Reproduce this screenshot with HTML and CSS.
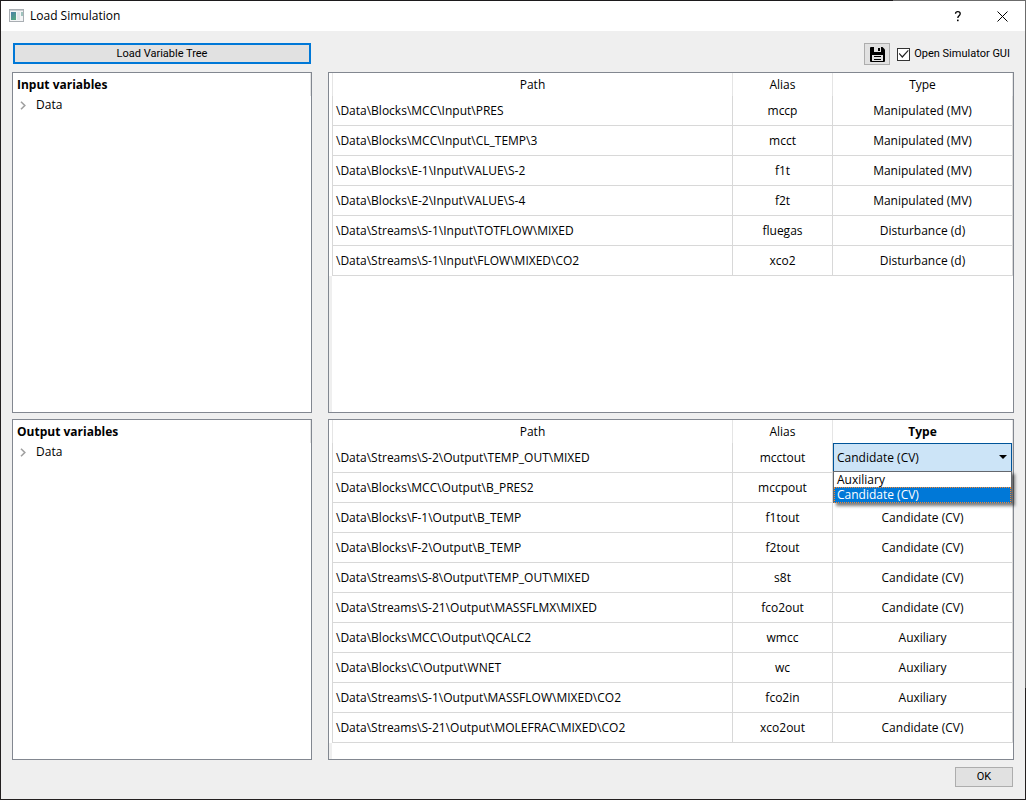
FILE: index.html
```html
<!DOCTYPE html>
<html lang="en">
<head>
<meta charset="utf-8">
<title>Load Simulation</title>
<link rel="stylesheet" href="styles.css">
</head>
<body>
<div class="frame">
  <div class="window">
    <header class="titlebar">
      <svg class="app-icon" width="16" height="14" viewBox="0 0 16 14" aria-hidden="true">
        <defs>
          <linearGradient id="pane" x1="0" y1="0" x2="0.6" y2="1">
            <stop offset="0" stop-color="#4a7fa8"/><stop offset="1" stop-color="#55a583"/>
          </linearGradient>
        </defs>
        <rect x="0.5" y="0.5" width="14" height="12" fill="#f4f5f6" stroke="#a9aeb3"/>
        <rect x="1" y="1" width="13" height="1" fill="#c9cdd1"/>
        <rect x="2" y="3" width="5" height="8" fill="url(#pane)"/>
        <rect x="8" y="3" width="3" height="8" fill="#e3e6ea"/>
        <rect x="12" y="3" width="2" height="4" fill="#9fc3bd"/>
      </svg>
      <h1 class="title">Load Simulation</h1>
      <button class="caption-button" type="button" aria-label="Help">
        <svg width="8" height="11" viewBox="0 0 8 11"><path d="M1.500 2.800C1.600 1.300 2.500.7 3.800.7c1.400 0 2.400.8 2.400 2.100 0 1.900-2.400 2-2.400 4.200" fill="none" stroke="#000" stroke-width="1.300"/><rect x="3" y="8.600" width="1.600" height="1.600"/></svg>
      </button>
      <button class="caption-button" type="button" aria-label="Close">
        <svg width="11" height="11" viewBox="0 0 11 11"><path d="M.5.5l10 10M10.500.5l-10 10" fill="none" stroke="#000"/></svg>
      </button>
    </header>

    <main class="content">
      <div class="load-cell"><button class="load-button" type="button">Load Variable Tree</button></div>
      <div class="tools">
        <button class="save-button" type="button" aria-label="Save">
          <svg width="15" height="15" viewBox="0 0 15 15"><path d="M1 0h11.500L15 2.500V14a1 1 0 0 1-1 1H1a1 1 0 0 1-1-1V1a1 1 0 0 1 1-1z" fill="#000"/><rect x="4" y="0" width="7" height="5" fill="#e1e1e1"/><rect x="8" y="1" width="2" height="3" fill="#000"/><rect x="2" y="8" width="11" height="6" fill="#e1e1e1"/><path d="M4 9.500h7M4 12.500h7" stroke="#000" stroke-width="1"/></svg>
        </button>
        <label class="check"><input class="check-box" type="checkbox" checked>Open Simulator GUI</label>
      </div>

      <section class="panel">
        <h2 class="tree-title">Input variables</h2>
        <ul class="tree"><li class="tree-item"><svg class="chevron" width="6" height="9" viewBox="0 0 6 9"><path d="M1 .7l3.800 3.800L1 8.300" fill="none" stroke="#a0a0a0" stroke-width="1.600"/></svg>Data</li></ul>
      </section>

      <section class="panel table-panel">
        <table class="grid">
          <colgroup><col class="col-gutter"><col><col class="col-alias"><col class="col-type"></colgroup>
          <thead><tr><td></td><th>Path</th><th>Alias</th><th>Type</th></tr></thead>
          <tbody>
            <tr><td></td><td class="path">\Data\Blocks\MCC\Input\PRES</td><td>mccp</td><td>Manipulated (MV)</td></tr>
            <tr><td></td><td class="path">\Data\Blocks\MCC\Input\CL_TEMP\3</td><td>mcct</td><td>Manipulated (MV)</td></tr>
            <tr><td></td><td class="path">\Data\Blocks\E-1\Input\VALUE\S-2</td><td>f1t</td><td>Manipulated (MV)</td></tr>
            <tr><td></td><td class="path">\Data\Blocks\E-2\Input\VALUE\S-4</td><td>f2t</td><td>Manipulated (MV)</td></tr>
            <tr><td></td><td class="path">\Data\Streams\S-1\Input\TOTFLOW\MIXED</td><td>fluegas</td><td>Disturbance (d)</td></tr>
            <tr><td></td><td class="path">\Data\Streams\S-1\Input\FLOW\MIXED\CO2</td><td>xco2</td><td>Disturbance (d)</td></tr>
          </tbody>
        </table>
      </section>

      <section class="panel">
        <h2 class="tree-title">Output variables</h2>
        <ul class="tree"><li class="tree-item"><svg class="chevron" width="6" height="9" viewBox="0 0 6 9"><path d="M1 .7l3.800 3.800L1 8.300" fill="none" stroke="#a0a0a0" stroke-width="1.600"/></svg>Data</li></ul>
      </section>

      <section class="panel table-panel">
        <table class="grid">
          <colgroup><col class="col-gutter"><col><col class="col-alias"><col class="col-type"></colgroup>
          <thead><tr><td></td><th>Path</th><th>Alias</th><th class="active">Type</th></tr></thead>
          <tbody>
            <tr><td></td><td class="path">\Data\Streams\S-2\Output\TEMP_OUT\MIXED</td><td>mcctout</td>
              <td class="editor">
                <div class="combo">
                  <select class="combo-field" aria-label="Type of mcctout"><option>Auxiliary</option><option selected>Candidate (CV)</option></select>
                  <svg class="combo-arrow" width="8" height="4" viewBox="0 0 8 4"><path d="M0 0h8L4 4z"/></svg>
                  <ul class="combo-list" role="listbox" aria-label="Type">
                    <li class="combo-option" role="option" aria-selected="false">Auxiliary</li>
                    <li class="combo-option selected" role="option" aria-selected="true">Candidate (CV)</li>
                  </ul>
                </div>
              </td></tr>
            <tr><td></td><td class="path">\Data\Blocks\MCC\Output\B_PRES2</td><td>mccpout</td><td></td></tr>
            <tr><td></td><td class="path">\Data\Blocks\F-1\Output\B_TEMP</td><td>f1tout</td><td>Candidate (CV)</td></tr>
            <tr><td></td><td class="path">\Data\Blocks\F-2\Output\B_TEMP</td><td>f2tout</td><td>Candidate (CV)</td></tr>
            <tr><td></td><td class="path">\Data\Streams\S-8\Output\TEMP_OUT\MIXED</td><td>s8t</td><td>Candidate (CV)</td></tr>
            <tr><td></td><td class="path">\Data\Streams\S-21\Output\MASSFLMX\MIXED</td><td>fco2out</td><td>Candidate (CV)</td></tr>
            <tr><td></td><td class="path">\Data\Blocks\MCC\Output\QCALC2</td><td>wmcc</td><td>Auxiliary</td></tr>
            <tr><td></td><td class="path">\Data\Blocks\C\Output\WNET</td><td>wc</td><td>Auxiliary</td></tr>
            <tr><td></td><td class="path">\Data\Streams\S-1\Output\MASSFLOW\MIXED\CO2</td><td>fco2in</td><td>Auxiliary</td></tr>
            <tr><td></td><td class="path">\Data\Streams\S-21\Output\MOLEFRAC\MIXED\CO2</td><td>xco2out</td><td>Candidate (CV)</td></tr>
          </tbody>
        </table>
      </section>

      <footer class="footer"><button class="ok-button" type="button">OK</button></footer>
    </main>
  </div>
</div>
</body>
</html>
```
FILE: styles.css
```css
* { box-sizing: border-box; }

body {
  margin: 0;
  color: #000;
  font: 12px/16px "Open Sans", "Noto Sans", sans-serif;
}

button, select, input { font: inherit; color: inherit; margin: 0; padding: 0; }
h1, h2, ul { margin: 0; padding: 0; list-style: none; }

.frame {
  min-height: 100vh;
  display: flex;
  padding: 1px;
  background:
    linear-gradient(90deg, #1c1a1c 87%, #6b6b6b 87%) top / 100% 1px no-repeat,
    linear-gradient(#6b6b6b 86%, #231f20 86%) right / 1px 100% no-repeat,
    #231f20;
}

.window { flex: 1; display: flex; flex-direction: column; background: #efefef; }

.titlebar { display: flex; align-items: center; height: 30px; padding-left: 8px; background: #fff; }
.title { flex: 1; margin-left: 5px; font-size: 12px; font-weight: 400; }
.caption-button {
  width: 45px;
  height: 30px;
  display: flex;
  align-items: center;
  justify-content: center;
  border: 0;
  background: none;
}

.content {
  flex: 1;
  display: grid;
  grid-template-columns: 300px 1fr;
  grid-template-rows: 29px 1fr 1fr 21px;
  column-gap: 16px;
  padding: 12px 11px;
}

.load-cell { padding: 0 1px; }
.load-button {
  width: 100%;
  height: 21px;
  border: 2px solid #0078d7;
  background: #e1e1e1;
}
.load-button, .tools, .ok-button {
  font-family: Roboto, "Open Sans", sans-serif;
  font-size: 11px;
  line-height: 18px;
}

.tools { display: flex; justify-content: flex-end; align-items: center; gap: 7px; height: 22px; padding-right: 4px; }
.save-button {
  width: 26px;
  height: 22px;
  display: flex;
  align-items: center;
  justify-content: center;
  border: 1px solid #adadad;
  background: #e1e1e1;
}
.check { display: flex; align-items: center; gap: 4px; }
.check-box {
  appearance: none;
  display: grid;
  place-items: center;
  width: 13px;
  height: 13px;
  border: 1px solid #333;
  background: #fff;
}
.check-box:checked::before {
  content: "";
  width: 10px;
  height: 8px;
  background: #222;
  clip-path: polygon(0 48%, 8% 38%, 36% 76%, 92% 0, 100% 8%, 36% 100%);
}

.panel { margin-bottom: 6px; border: 1px solid #828790; background: #fff; }

.tree-title {
  height: 23px;
  padding-left: 4px;
  border-right: 1px solid #e5e5e5;
  font-size: 12px;
  line-height: 24px;
  font-weight: 700;
}
.tree-item { display: flex; align-items: center; height: 18px; padding-left: 7px; }
.chevron { margin-right: 10px; }

.table-panel { background: linear-gradient(#efefef, #efefef) left / 3px 100% no-repeat, #fff; }
.grid { width: 100%; table-layout: fixed; border-collapse: separate; border-spacing: 0; background: #fff; }
.col-gutter { width: 4px; }
.col-alias { width: 100px; }
.col-type { width: 180px; }
.grid th, .grid td { padding: 0; text-align: center; font-weight: 400; border-right: 1px solid #d8d8d8; }
.grid thead tr { height: 23px; }
.grid thead th, .grid thead td { border-color: #e5e5e5; }
.grid th.active { font-weight: 700; }
.grid tbody tr { height: 30px; }
.grid tbody td { border-bottom: 1px solid #d8d8d8; }
.grid tbody td:first-child { border-bottom: 0; }
.grid tbody td.path { padding-left: 3px; text-align: left; }

.combo { position: relative; height: 29px; }
.combo-field {
  appearance: none;
  display: block;
  width: 100%;
  height: 29px;
  padding-left: 3px;
  border: 1px solid #005499;
  border-radius: 0;
  background: #cce4f7;
}
.combo-arrow { position: absolute; right: 5px; top: 12px; pointer-events: none; }
.combo-list {
  position: absolute;
  z-index: 1;
  top: 28px;
  left: 0;
  right: 0;
  border: 1px solid #64686e;
  border-bottom: 0;
  background: #fff;
  box-shadow: 3px 3px 3px rgba(0, 0, 0, 0.5);
  text-align: left;
}
.combo-option { height: 15px; padding-left: 3px; line-height: 16px; }
.combo-option.selected { height: 16px; background: #0078d7; color: #fff; outline: 1px dotted #ff8728; outline-offset: -1px; }

.footer { grid-column: 1 / -1; display: flex; justify-content: flex-end; align-items: flex-end; padding-right: 1px; }
.ok-button { width: 58px; height: 20px; border: 1px solid #adadad; background: #e1e1e1; }
```
